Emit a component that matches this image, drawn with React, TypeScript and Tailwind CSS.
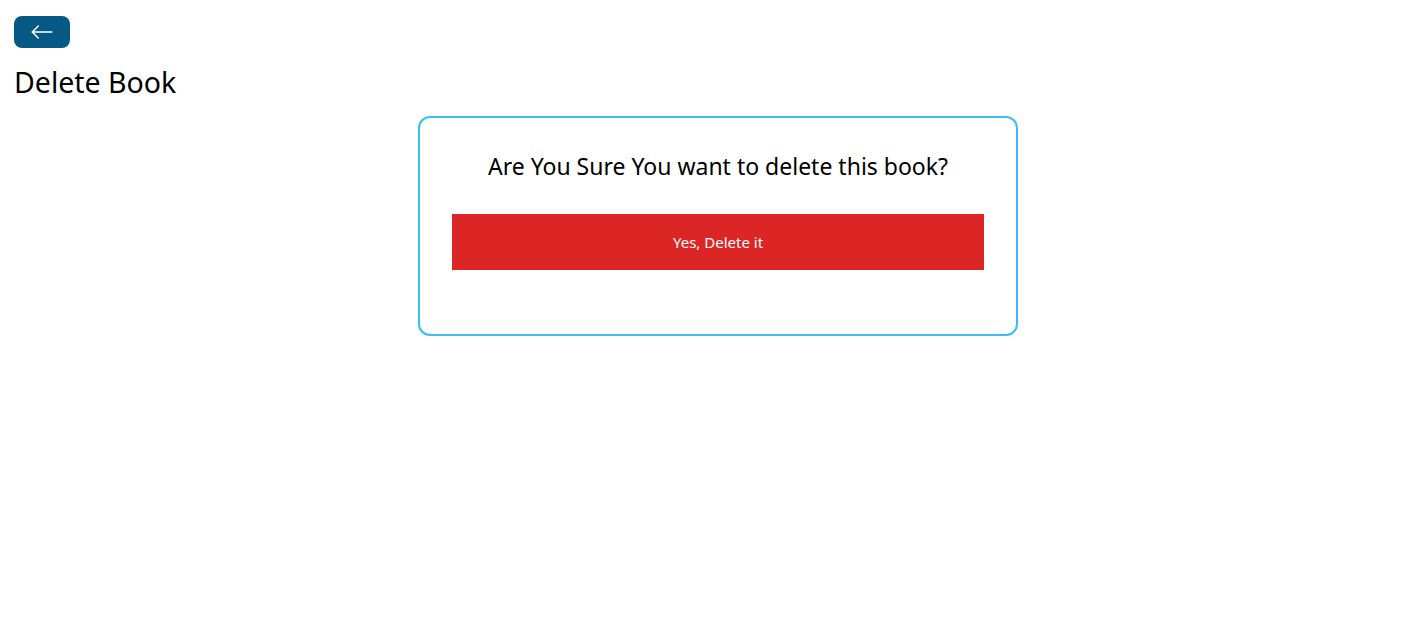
import React from 'react';
import { BsArrowLeft } from 'react-icons/bs';

const BackButton = () => (
  <div className="flex">
    <button className="bg-[#075985] text-white px-4 py-1 rounded-lg w-fit">
      <BsArrowLeft className="text-2xl" />
    </button>
  </div>
);

export default function App() {
  return (
    <div className="min-h-screen bg-white px-[14px] py-4 font-['Noto_Sans',sans-serif] text-black">
      <BackButton />
      <h1 className="text-[28.5px] leading-9 my-4">Delete Book</h1>
      <div className="pl-3">
        <div className="flex flex-col items-center border-2 border-[#38bdf8] rounded-xl w-[600px] p-8 mx-auto">
          <h3 className="text-[23px] leading-8">Are You Sure You want to delete this book?</h3>
          <button className="p-4 bg-[#dc2626] text-white my-8 w-full text-[15px] leading-6">Yes, Delete it</button>
        </div>
      </div>
    </div>
  );
}
